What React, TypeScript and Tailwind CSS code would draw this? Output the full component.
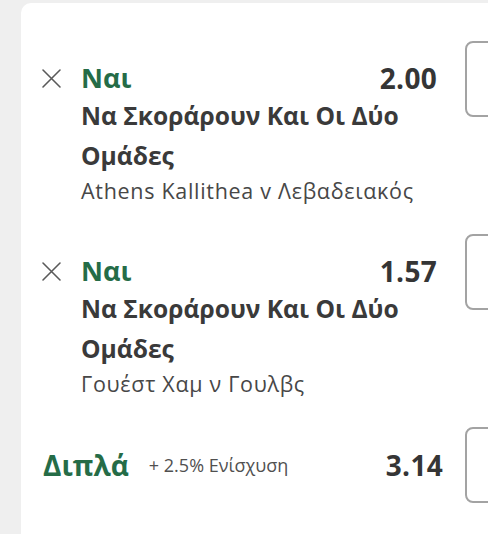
import React from 'react';

type Selection = {
  pick: string;
  market: string[];
  event: string;
  odds: string;
};

const SELECTIONS: Selection[] = [
  { pick: 'Ναι', market: ['Να Σκοράρουν Και Οι Δύο', 'Ομάδες'], event: 'Athens Kallithea v Λεβαδειακός', odds: '2.00' },
  { pick: 'Ναι', market: ['Να Σκοράρουν Και Οι Δύο', 'Ομάδες'], event: 'Γουέστ Χαμ ν Γουλβς', odds: '1.57' },
];

function CloseIcon() {
  return (
    <svg width="21" height="21" viewBox="0 0 21 21" className="shrink-0">
      <path d="M2 2 L19 19 M19 2 L2 19" stroke="#5a5a5a" strokeWidth="1.6" strokeLinecap="round" />
    </svg>
  );
}

function StakeBox() {
  return <div className="w-[60px] h-[76px] shrink-0 rounded-[8px] border-2 border-[#a3a3a3] bg-white" />;
}

function SelectionRow({ sel }: { sel: Selection }) {
  return (
    <div className="flex items-start">
      <div className="w-[424px] shrink-0 pt-[19px]">
        <div className="flex items-center h-[36px]">
          <div className="w-[40px] flex justify-start">
            <CloseIcon />
          </div>
          <div className="flex-1 text-[27px] font-bold text-[#256c47]">{sel.pick}</div>
          <div className="text-[28px] font-bold text-[#353535] pr-[28px] tracking-[0.3px]">{sel.odds}</div>
        </div>
        <div className="pl-[40px]">
          {sel.market.map((line, i) => (
            <div key={i} className="text-[24.6px] leading-[40px] font-bold text-[#3a3a3a]">
              {line}
            </div>
          ))}
          <div className="text-[21.5px] leading-[30px] text-[#474747] tracking-[0.7px]">{sel.event}</div>
        </div>
      </div>
      <StakeBox />
    </div>
  );
}

export default function App() {
  return (
    <div className="w-[488px] h-[534px] overflow-hidden bg-[#efefef] pt-[3px] pl-[21px]" style={{ fontFamily: '"Open Sans", "Noto Sans", sans-serif' }}>
      <div className="w-[520px] h-full bg-white rounded-tl-[10px] pt-[38px] pl-[20px] flex flex-col gap-[28px]">
        {SELECTIONS.map((sel, i) => (
          <SelectionRow key={i} sel={sel} />
        ))}
        <div className="flex items-center">
          <div className="w-[424px] shrink-0 flex items-center">
            <span className="text-[28px] font-bold text-[#256c47] pl-[2px]">Διπλά</span>
            <span className="text-[18px] text-[#505050] ml-[20px]">+ 2.5% Ενίσχυση</span>
            <span className="ml-auto text-[28px] font-bold text-[#353535] pr-[22px] tracking-[0.3px]">3.14</span>
          </div>
          <StakeBox />
        </div>
      </div>
    </div>
  );
}
